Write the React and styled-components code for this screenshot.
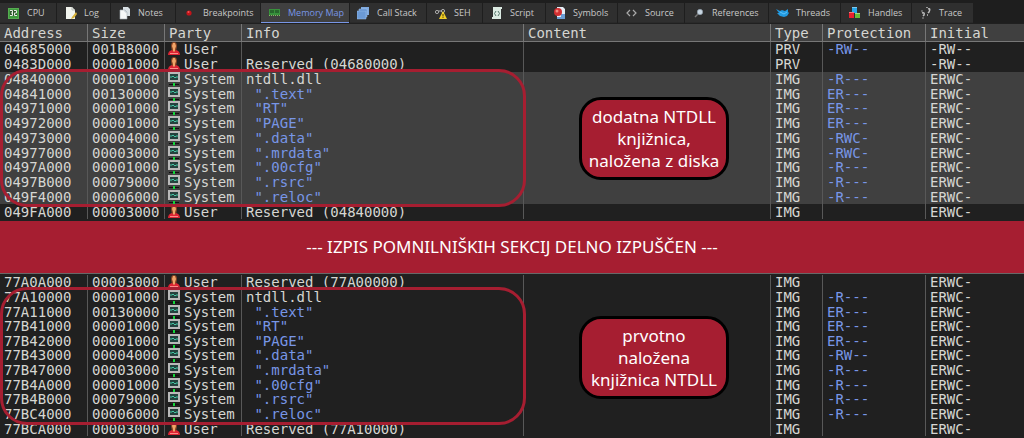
import React from "react"
import styled, { createGlobalStyle, css } from "styled-components"

const GlobalStyle = createGlobalStyle`
  * {
    box-sizing: border-box;
  }

  body {
    margin: 0;
    background-color: #202020;
  }
`

const Page = styled.main`
  display: grid;
  grid-template-rows: 23px 6fr 52px 5fr;
  height: 100vh;
  min-width: 980px;
  overflow: hidden;
  color: #d6d6d2;
  font-family: "DejaVu Sans Mono", monospace;
  font-size: 14px;
`

const TabBar = styled.nav`
  display: flex;
  gap: 1px;
  padding-top: 3px;
  background-color: #1e1e1e;
`

const Tab = styled.button`
  display: flex;
  align-items: center;
  gap: 6px;
  flex: none;
  width: ${props => props.$width}px;
  height: 20px;
  padding: 0 0 0 7px;
  border: 0;
  border-bottom: 1px solid #2a2a2a;
  background-color: #2f2f2f;
  color: #c8c8c8;
  font-family: "Open Sans", "Noto Sans", sans-serif;
  font-size: 9px;
  line-height: 12px;
  white-space: nowrap;

  ${props =>
    props.$active &&
    css`
      border-bottom-color: #7896e6;
      background-color: #404040;
      color: #7896e6;
    `}

  svg {
    flex: none;
  }
`

const Panel = styled.section`
  position: relative;
  display: grid;
  min-height: 0;
  padding: ${props => (props.$continued ? "1px 0 2px" : "1px 0 2px")};
  border-top: ${props => (props.$continued ? "1px solid #686868" : "0")};
  background-color: #202020;
`

const Table = styled.table`
  width: 100%;
  height: 100%;
  table-layout: fixed;
  border-collapse: separate;
  border-spacing: 0;
  line-height: 14px;
  white-space: pre;
`

const Col = styled.col`
  width: ${props => (props.$width ? `${props.$width}px` : "auto")};
`

const HeadCell = styled.th`
  height: 18px;
  padding: 0 0 0 4px;
  border-right: 1px solid #777777;
  border-bottom: 1px solid #777777;
  background-color: #404040;
  font-weight: normal;
  text-align: left;

  &:last-child {
    border-right: 0;
  }
`

const Cell = styled.td`
  padding: 0 0 0 4px;
  border-right: 1px solid #585858;
  color: ${props => (props.$accent ? "#7896e6" : "inherit")};

  &:last-child {
    border-right: 0;
  }
`

const Row = styled.tr`
  background-color: ${props => (props.$selected ? "#404040" : "transparent")};
`

const Party = styled.span`
  display: flex;
  align-items: center;
  gap: 4px;
  height: 14px;
  margin-left: -1px;

  svg {
    flex: none;
  }
`

const Outline = styled.div`
  position: absolute;
  top: ${props => props.$top}px;
  left: 0;
  width: 526px;
  height: 138px;
  border: 3px solid #a61e31;
  border-radius: 27px;
  pointer-events: none;
`

const Callout = styled.p`
  position: absolute;
  top: ${props => props.$top}px;
  left: 579px;
  display: flex;
  align-items: center;
  justify-content: center;
  width: 150px;
  height: 83px;
  margin: 0;
  border: 3px solid #000000;
  border-radius: 22px;
  background-color: #a61e31;
  color: #ffffff;
  font-family: "Noto Sans", sans-serif;
  font-size: 17px;
  line-height: 22px;
  text-align: center;
  white-space: pre;
`

const Banner = styled.div`
  display: flex;
  align-items: center;
  justify-content: center;
  background-color: #a61e31;
  color: #ffffff;
  font-family: "Noto Sans", sans-serif;
  font-size: 17px;
  line-height: 22px;
`

const Icon = ({ children, size = 14 }) => (
  <svg width={size} height="14" viewBox={`0 0 ${size} 14`} aria-hidden="true">
    {children}
  </svg>
)

const UserIcon = () => (
  <Icon size={12}>
    <path d="M4 10L3 4Q3 0 6 0Q9 0 9 4L8 10Z" fill="#8a4524" />
    <path d="M5 1H7L8 4L7 7V10H5V7L4 4Z" fill="#f0a468" />
    <path d="M0 13Q0 9 4 8L6 10L8 8Q12 9 12 13Z" fill="#dc2434" />
    <path d="M2 11H10V12H2Z" fill="#ff8a86" />
  </Icon>
)

const SystemIcon = () => (
  <Icon size={12}>
    <path d="M0 0H12V10H0Z" fill="#b9b9b9" />
    <path d="M2 2H10V8H2Z" fill="#24423e" />
    <path d="M2 5H4L5 4L7 6L8 5H10" fill="none" stroke="#45c6a4" />
    <path d="M1 12H11V13H1Z" fill="#101010" />
    <path d="M5 11H7V14H5Z" fill="#12d63a" />
  </Icon>
)

const tabs = [
  {
    label: "CPU",
    width: 56,
    icon: (
      <>
        <path d="M1 2H12V13H1Z" fill="#3f9a3e" />
        <path d="M1.5 2.5H11.5V12.5H1.5Z" fill="none" stroke="#6cbf62" strokeDasharray="1 1" />
        <path d="M3 4H10V10H3Z" fill="#2d5b2d" />
        <path
          d="M3 4.5H5.5V9.5H3M4 7H5.5M7 4.5H9.5V7H7.5V9.5H10"
          fill="none"
          stroke="#e4ece0"
        />
      </>
    ),
  },
  {
    label: "Log",
    width: 53,
    icon: (
      <>
        <path d="M2 1H8L11 4V13H2Z" fill="#f2f4ee" />
        <path d="M8 1V4H11" fill="none" stroke="#b8bdb8" />
        <path d="M12 6L8 11L7 13L10 12L13 8Z" fill="#d9b33a" />
      </>
    ),
  },
  {
    label: "Notes",
    width: 64,
    icon: (
      <>
        <path d="M5 1H10L12 3V10H5Z" fill="#d9e1e5" />
        <path
          d="M2 4H7L9 6V13H2Z"
          fill="#f5f8f8"
          stroke="#a5b0b5"
          strokeWidth=".6"
        />
        <path d="M7 4V6H9" fill="none" stroke="#a4b4bd" strokeWidth=".6" />
      </>
    ),
  },
  {
    label: "Breakpoints",
    width: 84,
    icon: (
      <>
        <circle cx="6" cy="7" r="2.6" fill="#c3141a" />
        <circle cx="5.5" cy="6" r="1" fill="#ee5454" />
      </>
    ),
  },
  {
    label: "Memory Map",
    width: 88,
    active: true,
    icon: (
      <>
        <path d="M1 3H12V9H1Z" fill="#38913c" />
        <path d="M3 4V7M5 4V7M8 4V7M10 4V7" stroke="#173c1c" />
        <path d="M1 9.5H12" stroke="#83be61" strokeDasharray="1 1" />
      </>
    ),
  },
  {
    label: "Call Stack",
    width: 76,
    icon: (
      <>
        <path d="M4 1H12V9H4Z" fill="#7fa9de" />
        <path d="M2 3H10V11H2Z" fill="#5d8dcc" stroke="#a9cbf3" strokeWidth=".5" />
        <path d="M0 5H9V13H0Z" fill="#6b9ad6" stroke="#9ec2ee" strokeWidth=".5" />
      </>
    ),
  },
  {
    label: "SEH",
    width: 55,
    icon: (
      <>
        <circle cx="3" cy="6" r="1.6" fill="none" stroke="#aaaaaa" />
        <circle cx="9" cy="5" r="1.6" fill="none" stroke="#aaaaaa" />
        <path d="M4 5H8" stroke="#aaaaaa" />
        <path d="M9 5L13 13H5Z" fill="#f0ce28" />
        <path d="M9 8V10.5M9 11.2V12" stroke="#493c00" />
      </>
    ),
  },
  {
    label: "Script",
    width: 62,
    icon: (
      <>
        <path d="M3 1H12V3H11V13H2V11H3Z" fill="#dcebe3" />
        <path
          d="M6 5L4.5 7.5L6 10M8 5L9.5 7.5L8 10"
          fill="none"
          stroke="#53756a"
        />
      </>
    ),
  },
  {
    label: "Symbols",
    width: 71,
    icon: (
      <>
        <path d="M4 1H10L12 3V12H4Z" fill="#e5edf5" />
        <path d="M8 8H12V13H4V11H8Z" fill="#6a9cd4" />
        <circle cx="5" cy="6" r="4" fill="#d12f32" />
        <circle cx="4" cy="5" r="1.5" fill="#f38b80" />
      </>
    ),
  },
  {
    label: "Source",
    width: 66,
    icon: (
      <path
        d="M5 4L2 7L5 10M8 4L11 7L8 10"
        fill="none"
        stroke="#aaaaaa"
        strokeWidth="1.2"
      />
    ),
  },
  {
    label: "References",
    width: 83,
    icon: (
      <>
        <path d="M6 8L3 11" stroke="#777777" strokeWidth="1.5" />
        <circle cx="8" cy="6" r="2.7" fill="#c9d6e2" stroke="#8998a6" strokeWidth=".6" />
      </>
    ),
  },
  {
    label: "Threads",
    width: 71,
    icon: (
      <>
        <path
          d="M0 3L4 5L6 4L9 5L12 3V6L13 7L11 10L8 11L4 10L1 7L3 7Z"
          fill="#229ae0"
        />
        <path d="M4 6L8 8L11 6" fill="none" stroke="#5fc2f8" />
      </>
    ),
  },
  {
    label: "Handles",
    width: 70,
    icon: (
      <>
        <path d="M4 1H9V7H4Z" fill="#25a5e7" />
        <path d="M1 6H6V12H1Z" fill="#e9202e" />
        <path d="M7 7H12V12H7Z" fill="#68bd35" />
        <path
          d="M4 1.5H9M1 6.5H6M7 7.5H12"
          stroke="#ffffff"
          strokeOpacity=".4"
        />
      </>
    ),
  },
  {
    label: "Trace",
    width: 61,
    icon: (
      <>
        <path
          d="M3 7Q6 6 5 9L4 10M9 3Q12 2 10 6L9 7"
          fill="none"
          stroke="#bdbdbd"
          strokeWidth="1.5"
        />
        <path
          d="M4 11V13M8.5 8V10M2 5H4M7 1.5H9"
          stroke="#999999"
        />
      </>
    ),
  },
]

const columns = [
  { title: "Address", width: 88 },
  { title: "Size", width: 77 },
  { title: "Party", width: 77 },
  { title: "Info", width: 282 },
  { title: "Content" },
  { title: "Type", width: 52 },
  { title: "Protection", width: 103 },
  { title: "Initial", width: 98 },
]

// address, size, party, info, type, protection, initial
const loadedRows = [
  ["04685000", "001B8000", "User", "", "PRV", "-RW--", "-RW--"],
  ["0483D000", "00001000", "User", "Reserved (04680000)", "PRV", "", "-RW--"],
  ["04840000", "00001000", "System", "ntdll.dll", "IMG", "-R---", "ERWC-"],
  ["04841000", "00130000", "System", ' ".text"', "IMG", "ER---", "ERWC-"],
  ["04971000", "00001000", "System", ' "RT"', "IMG", "ER---", "ERWC-"],
  ["04972000", "00001000", "System", ' "PAGE"', "IMG", "ER---", "ERWC-"],
  ["04973000", "00004000", "System", ' ".data"', "IMG", "-RWC-", "ERWC-"],
  ["04977000", "00003000", "System", ' ".mrdata"', "IMG", "-RWC-", "ERWC-"],
  ["0497A000", "00001000", "System", ' ".00cfg"', "IMG", "-R---", "ERWC-"],
  ["0497B000", "00079000", "System", ' ".rsrc"', "IMG", "-R---", "ERWC-"],
  ["049F4000", "00006000", "System", ' ".reloc"', "IMG", "-R---", "ERWC-"],
  ["049FA000", "00003000", "User", "Reserved (04840000)", "IMG", "", "ERWC-"],
]

const originalRows = [
  ["77A0A000", "00003000", "User", "Reserved (77A00000)", "IMG", "", "ERWC-"],
  ["77A10000", "00001000", "System", "ntdll.dll", "IMG", "-R---", "ERWC-"],
  ["77A11000", "00130000", "System", ' ".text"', "IMG", "ER---", "ERWC-"],
  ["77B41000", "00001000", "System", ' "RT"', "IMG", "ER---", "ERWC-"],
  ["77B42000", "00001000", "System", ' "PAGE"', "IMG", "ER---", "ERWC-"],
  ["77B43000", "00004000", "System", ' ".data"', "IMG", "-RW--", "ERWC-"],
  ["77B47000", "00003000", "System", ' ".mrdata"', "IMG", "-R---", "ERWC-"],
  ["77B4A000", "00001000", "System", ' ".00cfg"', "IMG", "-R---", "ERWC-"],
  ["77B4B000", "00079000", "System", ' ".rsrc"', "IMG", "-R---", "ERWC-"],
  ["77BC4000", "00006000", "System", ' ".reloc"', "IMG", "-R---", "ERWC-"],
  ["77BCA000", "00003000", "User", "Reserved (77A10000)", "IMG", "", "ERWC-"],
]

const MemoryTable = ({ rows, showHead, highlight }) => (
  <Table>
    <colgroup>
      {columns.map(column => (
        <Col key={column.title} $width={column.width} />
      ))}
    </colgroup>
    {showHead && (
      <thead>
        <tr>
          {columns.map(column => (
            <HeadCell key={column.title} scope="col">
              {column.title}
            </HeadCell>
          ))}
        </tr>
      </thead>
    )}
    <tbody>
      {rows.map(([address, size, party, info, type, protection, initial]) => (
        <Row key={address} $selected={highlight && party === "System"}>
          <Cell>{address}</Cell>
          <Cell>{size}</Cell>
          <Cell>
            <Party>
              {party === "User" ? <UserIcon /> : <SystemIcon />}
              {party}
            </Party>
          </Cell>
          <Cell $accent={info.startsWith(" ")}>{info}</Cell>
          <Cell />
          <Cell>{type}</Cell>
          <Cell $accent>{protection}</Cell>
          <Cell>{initial}</Cell>
        </Row>
      ))}
    </tbody>
  </Table>
)

export default function App() {
  return (
    <>
      <GlobalStyle />
      <Page>
        <TabBar>
          {tabs.map(tab => (
            <Tab
              key={tab.label}
              type="button"
              $width={tab.width}
              $active={tab.active}
            >
              <Icon>{tab.icon}</Icon>
              {tab.label}
            </Tab>
          ))}
        </TabBar>
        <Panel>
          <MemoryTable rows={loadedRows} showHead highlight />
          <Outline $top={46} />
          <Callout $top={74}>
            {"dodatna NTDLL\nknjižnica,\nnaložena z diska"}
          </Callout>
        </Panel>
        <Banner>--- IZPIS POMNILNIŠKIH SEKCIJ DELNO IZPUŠČEN ---</Banner>
        <Panel $continued>
          <MemoryTable rows={originalRows} />
          <Outline $top={13} />
          <Callout $top={42}>{"prvotno\nnaložena\nknjižnica NTDLL"}</Callout>
        </Panel>
      </Page>
    </>
  )
}
